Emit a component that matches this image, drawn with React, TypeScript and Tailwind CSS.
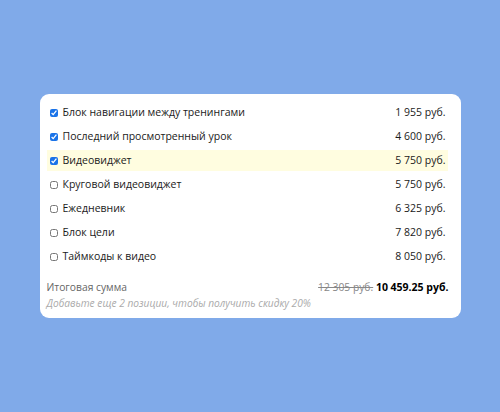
import React from "react";

const items = [
  { name: "Блок навигации между тренингами", price: "1 955 руб.", checked: true },
  { name: "Последний просмотренный урок", price: "4 600 руб.", checked: true },
  { name: "Видеовиджет", price: "5 750 руб.", checked: true, hl: true },
  { name: "Круговой видеовиджет", price: "5 750 руб.", checked: false },
  { name: "Ежедневник", price: "6 325 руб.", checked: false },
  { name: "Блок цели", price: "7 820 руб.", checked: false },
  { name: "Таймкоды к видео", price: "8 050 руб.", checked: false },
];

export default function App() {
  return (
    <div
      className="w-[500px] h-[412px] bg-[#80aae9] flex items-center justify-center"
      style={{ fontFamily: '"Open Sans", "Noto Sans", sans-serif' }}
    >
      <div className="w-[421px] h-[224px] bg-white rounded-[9px] pl-[7px] pr-[13px] pt-[8px] flex flex-col">
        <div className="flex flex-col gap-[3px]">
          {items.map((it) => (
            <div
              key={it.name}
              className={`h-[21px] flex items-center justify-between pl-[3px] pr-[2px] ${
                it.hl ? "bg-[#fffde0]" : ""
              }`}
            >
              <label className="flex items-center text-[10.5px] text-[#1a1a1a]">
                <input
                  type="checkbox"
                  defaultChecked={it.checked}
                  className="w-[8px] h-[8px] m-0 mr-[4px] accent-[#1a73e8]"
                />
                <span className="ml-[1px]">{it.name}</span>
              </label>
              <span className="text-[10.5px] text-[#1a1a1a]">{it.price}</span>
            </div>
          ))}
        </div>
        <div className="mt-[12px] flex justify-between items-center text-[10.3px] leading-[16px] -mr-[1px]">
          <span className="text-[#666]">Итоговая сумма</span>
          <span>
            <span className="line-through text-[#888]">12 305 руб.</span>{" "}
            <span className="font-bold text-[10.5px] text-black">10 459.25 руб.</span>
          </span>
        </div>
        <div className="text-[10.2px] leading-[16px] italic text-[#aaa]">
          Добавьте еще 2 позиции, чтобы получить скидку 20%
        </div>
      </div>
    </div>
  );
}
